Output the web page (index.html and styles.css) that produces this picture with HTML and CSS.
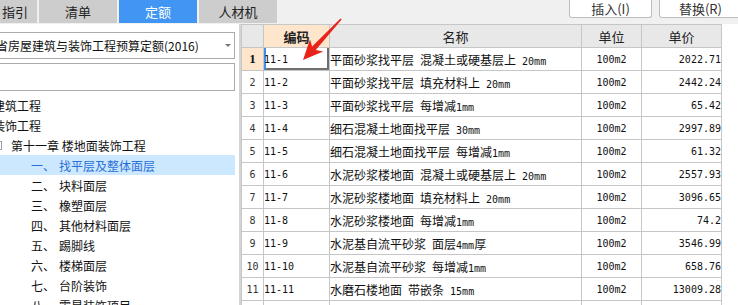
FILE: index.html
```html
<!DOCTYPE html>
<html lang="zh-CN">
<head>
<meta charset="utf-8">
<title>定额</title>
<link rel="stylesheet" href="styles.css">
</head>
<body>
<div class="topbar">
  <div class="tabs">
    <div class="tab first">指引</div>
    <div class="tab">清单</div>
    <div class="tab active">定额</div>
    <div class="tab">人材机</div>
  </div>
  <div class="tools">
    <button class="btn">插入(I)</button>
    <button class="btn">替换(R)</button>
  </div>
</div>
<div class="main">
  <aside class="side">
    <div class="select"><span class="select-text">省房屋建筑与装饰工程预算定额(2016)</span><span class="caret"></span></div>
    <div class="search"></div>
    <ul class="tree">
      <li class="l1">建筑工程</li>
      <li class="l1">装饰工程</li>
      <li class="l2"><span class="exp"></span>第十一章 楼地面装饰工程</li>
      <li class="l3 sel"><span class="num">一、</span>找平层及整体面层</li>
      <li class="l3"><span class="num">二、</span>块料面层</li>
      <li class="l3"><span class="num">三、</span>橡塑面层</li>
      <li class="l3"><span class="num">四、</span>其他材料面层</li>
      <li class="l3"><span class="num">五、</span>踢脚线</li>
      <li class="l3"><span class="num">六、</span>楼梯面层</li>
      <li class="l3"><span class="num">七、</span>台阶装饰</li>
      <li class="l3"><span class="num">八、</span>零星装饰项目</li>
    </ul>
  </aside>
  <div class="splitter"></div>
  <div class="grid-wrap">
    <table class="grid">
      <colgroup><col class="c-no"><col class="c-code"><col class="c-name"><col class="c-unit"><col class="c-price"></colgroup>
      <thead>
        <tr><th class="h-no"></th><th class="h-code">编码</th><th>名称</th><th>单位</th><th>单价</th></tr>
      </thead>
      <tbody>
        <tr><td class="no cur">1</td><td class="code focus">11-1</td><td class="name">平面砂浆找平层<span class="m"> </span>混凝土或硬基层上<span class="m"> 20mm</span></td><td class="unit">100m2</td><td class="price">2022.71</td></tr>
        <tr><td class="no">2</td><td class="code">11-2</td><td class="name">平面砂浆找平层<span class="m"> </span>填充材料上<span class="m"> 20mm</span></td><td class="unit">100m2</td><td class="price">2442.24</td></tr>
        <tr><td class="no">3</td><td class="code">11-3</td><td class="name">平面砂浆找平层<span class="m"> </span>每增减<span class="m">1mm</span></td><td class="unit">100m2</td><td class="price">65.42</td></tr>
        <tr><td class="no">4</td><td class="code">11-4</td><td class="name">细石混凝土地面找平层<span class="m"> 30mm</span></td><td class="unit">100m2</td><td class="price">2997.89</td></tr>
        <tr><td class="no">5</td><td class="code">11-5</td><td class="name">细石混凝土地面找平层<span class="m"> </span>每增减<span class="m">1mm</span></td><td class="unit">100m2</td><td class="price">61.32</td></tr>
        <tr><td class="no">6</td><td class="code">11-6</td><td class="name">水泥砂浆楼地面<span class="m"> </span>混凝土或硬基层上<span class="m"> 20mm</span></td><td class="unit">100m2</td><td class="price">2557.93</td></tr>
        <tr><td class="no">7</td><td class="code">11-7</td><td class="name">水泥砂浆楼地面<span class="m"> </span>填充材料上<span class="m"> 20mm</span></td><td class="unit">100m2</td><td class="price">3096.65</td></tr>
        <tr><td class="no">8</td><td class="code">11-8</td><td class="name">水泥砂浆楼地面<span class="m"> </span>每增减<span class="m">1mm</span></td><td class="unit">100m2</td><td class="price">74.2</td></tr>
        <tr><td class="no">9</td><td class="code">11-9</td><td class="name">水泥基自流平砂浆<span class="m"> </span>面层<span class="m">4mm</span>厚</td><td class="unit">100m2</td><td class="price">3546.99</td></tr>
        <tr><td class="no">10</td><td class="code">11-10</td><td class="name">水泥基自流平砂浆<span class="m"> </span>每增减<span class="m">1mm</span></td><td class="unit">100m2</td><td class="price">658.76</td></tr>
        <tr><td class="no">11</td><td class="code">11-11</td><td class="name">水磨石楼地面<span class="m"> </span>带嵌条<span class="m"> 15mm</span></td><td class="unit">100m2</td><td class="price">13009.28</td></tr>
        <tr><td class="no"></td><td class="code"></td><td class="name"></td><td class="unit"></td><td class="price"></td></tr>
      </tbody>
    </table>
  </div>
</div>
<svg class="arrow" width="738" height="305" viewBox="0 0 738 305">
  <polygon points="303,60 323.2,51.5 315.7,50 341.7,19.5 340.5,18.4 312.1,46.6 310,39.3" fill="#e8231a"/>
</svg>
</body>
</html>
```

FILE: styles.css
```css
* { box-sizing: border-box; }
html, body { margin: 0; padding: 0; }
body {
  width: 738px;
  height: 305px;
  overflow: hidden;
  position: relative;
  background: #fff;
  font-family: "Noto Sans CJK SC", sans-serif;
  font-size: 12px;
  color: #111;
}

.topbar {
  display: flex;
  height: 24px;
  background: #f0f0f0;
}
.tabs { display: flex; gap: 2px; height: 23px; flex: none; }
.tab {
  width: 78px;
  background: #cdcdcd;
  display: flex;
  align-items: center;
  justify-content: center;
  font-size: 13px;
  color: #222;
}
.tab.first { width: 37px; justify-content: flex-start; padding-left: 2px; }
.tab.active { background: #4296f3; color: #fff; }

.tools { display: flex; gap: 7px; margin-left: 292px; flex: none; }
.btn {
  flex: none;
  width: 83px;
  height: 18px;
  padding: 0;
  border: 1px solid #bdbdbd;
  border-top: none;
  border-radius: 0 0 3px 3px;
  background: #fff;
  font-family: "Noto Sans CJK SC", sans-serif;
  font-size: 13px;
  line-height: 16px;
  color: #333;
}

.main { display: flex; height: 281px; }
.side { width: 239px; flex: none; overflow: hidden; }
.select {
  margin: 8px 4px 0 -10px;
  height: 27px;
  border: 1px solid #ababab;
  display: flex;
  align-items: center;
  padding-left: 5px;
  white-space: nowrap;
  font-size: 12px;
}
.caret {
  margin-left: auto;
  margin-right: 3px;
  width: 0;
  height: 0;
  border-left: 3px solid transparent;
  border-right: 3px solid transparent;
  border-top: 3px solid #777;
}
.search {
  margin: 4px 4px 0 -10px;
  height: 28px;
  border: 1px solid #ababab;
}
.tree { list-style: none; margin: 4px 4px 0 -10px; padding: 0; }
.tree li {
  height: 20px;
  display: flex;
  align-items: center;
  white-space: nowrap;
}
.l1, .l2 { padding-left: 3px; }
.l3 { padding-left: 41px; }
.tree .sel { background: #cce8ff; color: #2a6fd6; }
.exp { flex: none; width: 9px; height: 9px; border: 1px solid #a0a0a0; margin-right: 9px; }
.num { flex: none; width: 28px; }

.splitter { width: 2px; flex: none; background: #d4d4d4; }
.grid-wrap { flex: none; }
.grid {
  border-collapse: collapse;
  table-layout: fixed;
  width: 480px;
}
.c-no { width: 22px; }
.c-code { width: 66px; }
.c-name { width: 252px; }
.c-unit { width: 60px; }
.c-price { width: 80px; }
.grid th, .grid td {
  border: 1px solid #c6c6c6;
  height: 23px;
  padding: 0;
  white-space: nowrap;
  overflow: hidden;
}
.grid th {
  background: #e8e8e8;
  font-weight: normal;
  font-size: 13px;
  color: #222;
}
.grid th.h-code { background: #fde6cc; font-weight: bold; }
.m, .code, .unit, .price, .no {
  font-family: "DejaVu Sans Mono", monospace;
  font-size: 10px;
}
.no { text-align: center; color: #333; }
.no.cur { background: #fde6cc; font-family: "Liberation Serif", serif; font-weight: bold; font-size: 13px; color: #111; }
.code { padding-left: 2px; }
.code.focus { box-shadow: inset 2px 0 #3d8ee8, inset -2px -2px #707070; }
.name { padding-left: 2px; font-size: 12px; }
.unit { text-align: center; }
.price { text-align: right; padding-right: 4px; }

.arrow { position: absolute; left: 0; top: 0; pointer-events: none; }
```
